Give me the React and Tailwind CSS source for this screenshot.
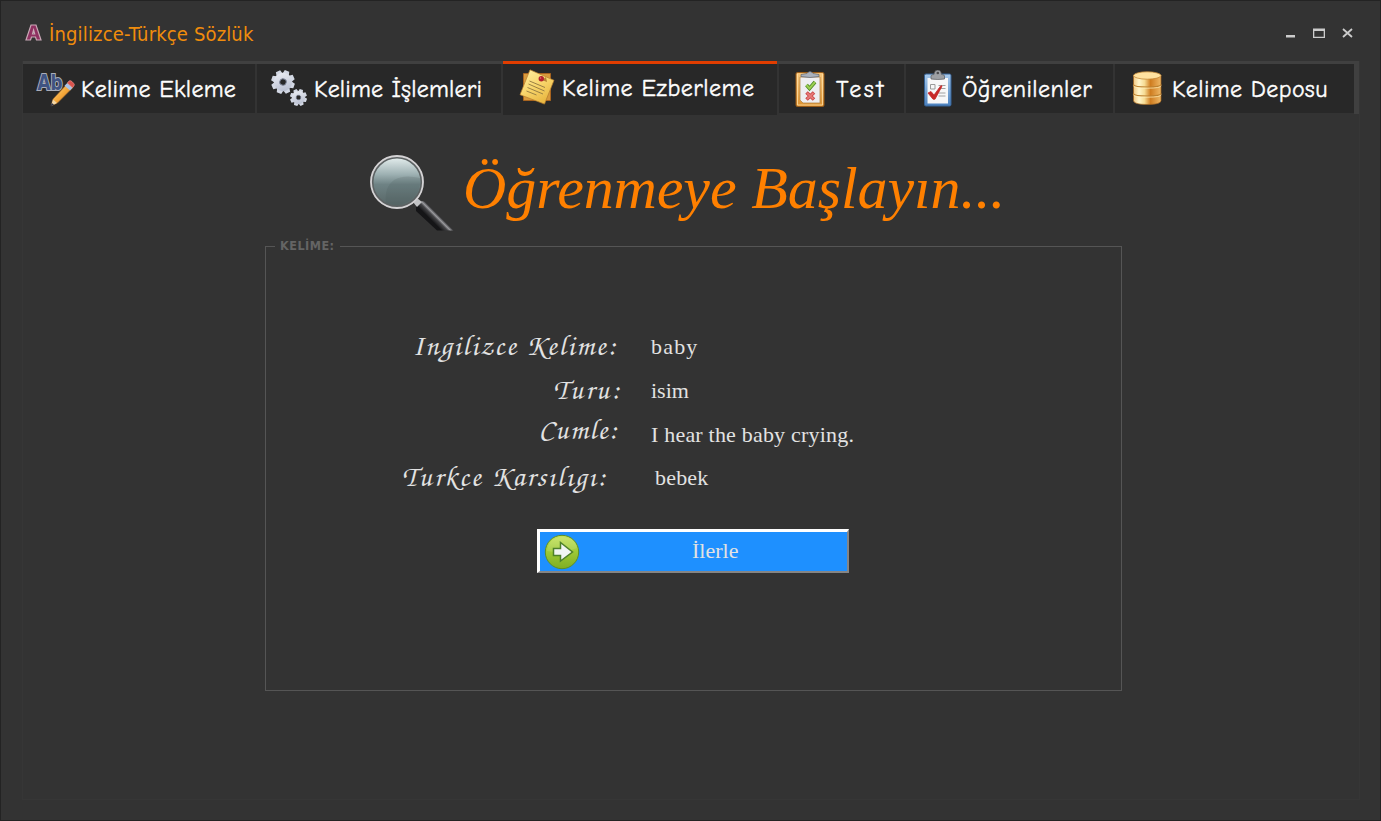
import React from "react";

function AbIcon() {
  return (
    <svg width="40" height="40" viewBox="0 0 40 40" className="shrink-0">
      <defs>
        <linearGradient id="pencil" x1="0" y1="0" x2="1" y2="1">
          <stop offset="0" stopColor="#ffe39a" />
          <stop offset="0.5" stopColor="#f5a83a" />
          <stop offset="1" stopColor="#b8641a" />
        </linearGradient>
      </defs>
      <text x="2.500" y="21" fontFamily="DejaVu Sans Condensed, DejaVu Sans" fontWeight="bold" fontSize="22" textLength="25" lengthAdjust="spacingAndGlyphs" fill="#3f5382" stroke="#a9adb9" strokeWidth="2.200" paintOrder="stroke">Ab</text>
      <path d="M33 14l5 4.500-15.500 15.500-6.500 3 2-7z" fill="url(#pencil)" stroke="#8a5a2a" strokeWidth="0.600" />
      <path d="M18 30.500l4 3.500-6 3z" fill="#f3d7a6" />
      <path d="M16.800 34l2.200 1.800-3.600 1.800z" fill="#27304a" />
      <path d="M29.500 16.800l2.800-2.800 5.200 4.700-2.500 2.700z" fill="#a9c3e6" />
      <path d="M32.300 14l1.700-2q1-1 3 .5l1.600 1.700q1.500 1.500.2 3l-1.300 1.500z" fill="#d9534e" stroke="#f4a8a0" strokeWidth="0.500" />
    </svg>
  );
}

function Gear({ cx, cy, r }) {
  const teeth = [0, 45, 90, 135, 180, 225, 270, 315];
  return (
    <g transform={`translate(${cx} ${cy}) rotate(20) scale(${r / 12})`}>
      {teeth.map((a) => (
        <path key={a} d="M-3.400 -8L-2.400 -12H2.400L3.400 -8z" transform={`rotate(${a})`} fill="#d3d8e4" />
      ))}
      <circle r="6.300" fill="none" stroke="url(#steel)" strokeWidth="6" />
      <circle r="3.300" fill="#282828" stroke="#8b93a7" strokeWidth="1" />
    </g>
  );
}

function GearsIcon() {
  return (
    <svg width="38" height="40" viewBox="0 0 38 40" className="shrink-0">
      <defs>
        <linearGradient id="steel" gradientUnits="userSpaceOnUse" x1="-8" y1="-12" x2="8" y2="12">
          <stop offset="0" stopColor="#f3f5fa" />
          <stop offset="1" stopColor="#aeb5c9" />
        </linearGradient>
      </defs>
      <Gear cx={12} cy={13} r={11.800} />
      <Gear cx={27.500} cy={28.500} r={8.500} />
    </svg>
  );
}

function NoteIcon() {
  return (
    <svg width="36" height="38" viewBox="0 0 36 38" className="shrink-0">
      <defs>
        <linearGradient id="note" x1="0" y1="0" x2="0.600" y2="1">
          <stop offset="0" stopColor="#fff0a8" />
          <stop offset="0.550" stopColor="#f8d66c" />
          <stop offset="1" stopColor="#e9b742" />
        </linearGradient>
      </defs>
      <path d="M4.500 4.500h27v27h-27z" fill="#d89a3c" stroke="#a8641f" strokeWidth="1" />
      <path d="M11 0.800l24 10.500-9.500 23.800L1 25.700z" fill="url(#note)" stroke="#b57b2c" strokeWidth="0.700" />
      <path d="M10.500 12l15.500 6.500M9.500 15l16 7M8.500 18.500l15.500 6.500M7.500 22l10 4" stroke="#9a8144" strokeWidth="1" />
      <path d="M23 11l5 2-1-5z" fill="#b68132" />
      <circle cx="22.300" cy="9.800" r="2.700" fill="#b3202e" />
      <circle cx="21.500" cy="9" r="0.800" fill="#e8707a" />
    </svg>
  );
}

function TestIcon() {
  return (
    <svg width="30" height="38" viewBox="0 0 30 38" className="shrink-0">
      <defs>
        <linearGradient id="board" x1="0" y1="0" x2="0" y2="1">
          <stop offset="0" stopColor="#f6c67c" />
          <stop offset="1" stopColor="#dc912f" />
        </linearGradient>
      </defs>
      <rect x="1" y="2.500" width="28" height="34" rx="1.500" fill="url(#board)" stroke="#9b5c19" />
      <path d="M2.500 4v31h25v-31" fill="none" stroke="#ffe1a8" strokeWidth="0.800" />
      <path d="M5 7h20v26h-17l-3-3z" fill="#eeeef1" stroke="#b48649" strokeWidth="0.800" />
      <path d="M6 6.500V4.500q3-.5 6-1Q15 -.5 18 3.500q3 .5 6 1V6.500q-9 2-18 0z" fill="#aab1bd" stroke="#5d6470" strokeWidth="0.700" />
      <path d="M11.500 15l3 3.500 5.500-6.500" fill="none" stroke="#4b8625" strokeWidth="3.600" />
      <path d="M11.500 15l3 3.500 5.500-6.500" fill="none" stroke="#9bcf50" strokeWidth="2" />
      <path d="M11.500 22.500l7.500 7M19 22.500l-7.500 7" stroke="#c94444" strokeWidth="3.600" />
      <path d="M12 23l6.500 6M18.500 23l-6.500 6" stroke="#e77a78" strokeWidth="1.800" />
    </svg>
  );
}

function LearnedIcon() {
  return (
    <svg width="30" height="38" viewBox="0 0 30 38" className="shrink-0">
      <defs>
        <linearGradient id="bluebd" x1="0" y1="0" x2="0" y2="1">
          <stop offset="0" stopColor="#a9cbed" />
          <stop offset="1" stopColor="#4a80bd" />
        </linearGradient>
      </defs>
      <rect x="2.500" y="4" width="26.500" height="32" rx="1.500" fill="url(#bluebd)" stroke="#376396" />
      <path d="M5.500 8h20.500v25.500h-20.500z" fill="#f7f7f8" />
      <path d="M9 9V6q0-1.500 3-1.500l.5-2q.5-2.500 3.300-2.500T19 2.500l.5 2q3 0 3 1.500v3q-6.500 1-13.500 0z" fill="#9da0a4" stroke="#5b5d60" strokeWidth="0.700" />
      <circle cx="15.800" cy="3" r="1.300" fill="#4b4b4d" />
      <path d="M8.500 14.500h4.500v4.500h-4.500z" fill="none" stroke="#9a9a9a" />
      <path d="M16.500 15.500h7M16.500 18.500h7M16.500 23h7M16.500 26h7" stroke="#a0a0a0" />
      <path d="M6 23l3-1.500 3 3.500 7-9.500 1 .7-7 13h-2z" fill="#c72828" stroke="#c72828" strokeWidth="0.800" />
    </svg>
  );
}

function DatabaseIcon() {
  return (
    <svg width="30" height="36" viewBox="0 0 30 36" className="shrink-0">
      <defs>
        <linearGradient id="gold">
          <stop offset="0" stopColor="#f3c983" />
          <stop offset="0.200" stopColor="#fff6cb" />
          <stop offset="0.400" stopColor="#f6dc94" />
          <stop offset="0.620" stopColor="#cf7d20" />
          <stop offset="1" stopColor="#eeb867" />
        </linearGradient>
      </defs>
      <path d="M1.500 4.500v25q0 4 13.750 4t13.750-4V4.500z" fill="url(#gold)" stroke="#a46520" strokeWidth="0.700" />
      <path d="M1.500 13.500q0 2.500 13.750 2.500t13.750-2.500M1.500 22.500q0 2.500 13.750 2.500t13.750-2.500" fill="none" stroke="#bd812f" strokeWidth="1.200" />
      <path d="M1.500 14.700q0 2.500 13.750 2.500t13.750-2.500M1.500 23.700q0 2.500 13.750 2.500t13.750-2.500" fill="none" stroke="#fff0bb" strokeWidth="0.700" />
      <ellipse cx="15.250" cy="4.500" rx="13.750" ry="3.700" fill="#ffe2a0" stroke="#c58a3a" strokeWidth="0.800" />
    </svg>
  );
}

function MagnifierIcon() {
  return (
    <svg width="86" height="78" viewBox="0 0 86 78" className="shrink-0">
      <defs>
        <linearGradient id="lens" x1="0" y1="0" x2="0" y2="1">
          <stop offset="0" stopColor="#e6efef" />
          <stop offset="0.350" stopColor="#9db0b2" />
          <stop offset="0.550" stopColor="#6e8284" />
          <stop offset="1" stopColor="#566464" />
        </linearGradient>
        <linearGradient id="handle" gradientUnits="userSpaceOnUse" x1="70" y1="54" x2="60" y2="64">
          <stop offset="0" stopColor="#151517" />
          <stop offset="0.350" stopColor="#2a2a2c" />
          <stop offset="0.550" stopColor="#98989c" />
          <stop offset="0.700" stopColor="#444447" />
          <stop offset="1" stopColor="#151517" />
        </linearGradient>
      </defs>
      <path d="M47 52l6-5q2 0 3 1l28.500 28.500H68L47 57z" fill="url(#handle)" />
      <path d="M44 48l4-4 5 4-5 5z" fill="#c2c3c5" />
      <circle cx="28" cy="28" r="25" fill="url(#lens)" stroke="#5d6263" strokeWidth="3" />
      <circle cx="28" cy="28" r="26" fill="none" stroke="#d5d3d5" strokeWidth="1.800" />
      <path d="M17 49q-2-16 8-23 10-6 26-2 1 15-8 21-12 9-26 4z" fill="#485657" opacity="0.180" />
    </svg>
  );
}

function NextIcon() {
  return (
    <svg width="36" height="36" viewBox="0 0 36 36" className="shrink-0">
      <defs>
        <linearGradient id="green" x1="0" y1="0" x2="0" y2="1">
          <stop offset="0" stopColor="#c5e35b" />
          <stop offset="0.500" stopColor="#9cc836" />
          <stop offset="1" stopColor="#7fae22" />
        </linearGradient>
      </defs>
      <circle cx="18" cy="18" r="16.700" fill="url(#green)" stroke="#5c8f27" />
      <path d="M3 17Q5 3 18 3t15 11Q18 20 3 17z" fill="#fff" opacity="0.120" />
      <path d="M9.500 14.500h7V8.500L28.500 18 16.500 27v-5.500h-7z" fill="#f1f5f3" stroke="#4e812a" strokeWidth="1.500" />
    </svg>
  );
}

const tabs = [
  { label: "Kelime Ekleme", icon: <AbIcon />, box: "w-[232px] pl-[12px] gap-[6px]", text: "tracking-[0.3px]" },
  { label: "Kelime İşlemleri", icon: <GearsIcon />, box: "w-[244px] pl-[14px] gap-[5px]", text: "tracking-[0.2px]" },
  { label: "Kelime Ezberleme", icon: <NoteIcon />, box: "w-[274px] pl-[16px] gap-[7px]", text: "tracking-[0.5px]", active: true },
  { label: "Test", icon: <TestIcon />, box: "w-[125px] pl-[16px] gap-[11px]", text: "tracking-[2.6px]" },
  { label: "Öğrenilenler", icon: <LearnedIcon />, box: "w-[207px] pl-[16px] gap-[10px]", text: "tracking-[0.4px]" },
  { label: "Kelime Deposu", icon: <DatabaseIcon />, box: "w-[239px] pl-[17px] gap-[10px]", text: "tracking-[0.4px]" },
];

function Tab({ label, icon, box, text, active }) {
  return (
    <div className={`flex shrink-0 items-center bg-[#282828] ${box} ${active ? "-mt-[3px] h-[54px] border-t-[3px] border-[#e13d00] pb-[3px]" : "h-[49px]"}`}>
      {icon}
      <span className={`whitespace-nowrap font-['Comic_Sans_MS','Comic_Neue','Open_Sans',sans-serif] text-[24px] leading-[30px] text-white [-webkit-text-stroke:0.4px_white] ${text}`}>{label}</span>
    </div>
  );
}

const rows = [
  { label: "Ingilizce Kelime:", value: "baby", row: "h-[44px]", l: "w-[351px] tracking-[1.8px] -mt-[6px]", v: "ml-[34px] tracking-[1.2px]" },
  { label: "Turu:", value: "isim", row: "h-[44px]", l: "w-[355px] tracking-[2px] -mt-[6px]", v: "ml-[30px]" },
  { label: "Cumle:", value: "I hear the baby crying.", row: "h-[43px]", l: "w-[352px] tracking-[1.4px] -mt-[14px]", v: "ml-[33px] tracking-[0.2px]" },
  { label: "Turkce Karsılıgı:", value: "bebek", row: "h-[43px]", l: "w-[341px] tracking-[2px] -mt-[6px]", v: "ml-[48px] tracking-[0.2px]" },
];

export default function App() {
  return (
    <div className="flex h-[821px] w-[1381px] flex-col overflow-hidden border border-[#232323] bg-[#333333]">
      <header className="flex h-[60px] shrink-0 items-center justify-between pl-[24px] pr-[25px] pt-[5px]">
        <div className="flex items-center gap-[7px]">
          <svg width="17" height="17" viewBox="0 0 17 17" className="-mt-[2px]">
            <path fillRule="evenodd" d="M6 1h5l5 15h-4.500l-1-3h-4l-1 3H1zM7.500 10h2.200l-1.100-4z" fill="#8f3161" stroke="#c9a9b7" strokeWidth="1.200" />
          </svg>
          <h1 className="whitespace-nowrap font-['DejaVu_Sans_Condensed','DejaVu_Sans',sans-serif] text-[20px] leading-[24px] tracking-[0.15px] text-[#f08c0c]">İngilizce-Türkçe Sözlük</h1>
        </div>
        <svg width="70" height="14" viewBox="0 0 70 14" className="text-[#cccccc]">
          <path d="M1 8h9v2.500H1z" fill="currentColor" />
          <path fillRule="evenodd" d="M28 1.500h12v9.500H28zM29.300 4v5.700h9.400V4z" fill="currentColor" />
          <path d="M58 2l9 8M67 2l-9 8" stroke="currentColor" strokeWidth="1.800" />
        </svg>
      </header>
      <main className="mx-[21px] flex h-[739px] w-[1338px] shrink-0 flex-col border border-t-0 border-[#363636]">
        <nav className="flex h-[53px] shrink-0 gap-[2px] border-r-[5px] border-t-[3px] border-[#404040] bg-[#333333]">
          {tabs.map((t) => <Tab key={t.label} {...t} />)}
        </nav>
        <section className="flex flex-col">
          <div className="flex h-[124px] items-start pl-[346px] pt-[40px]">
            <MagnifierIcon />
            <h2 className="ml-[8px] whitespace-nowrap font-['Liberation_Serif',serif] text-[60px] italic leading-[68px] tracking-[-0.1px] text-[#ff8000]">Öğrenmeye Başlayın...</h2>
          </div>
          <fieldset className="ml-[242px] h-[453px] w-[857px] border border-[#555555] pt-[71px]">
            <legend className="ml-[9px] px-[5px] font-['DejaVu_Sans_Condensed','DejaVu_Sans',sans-serif] text-[12.5px] font-bold leading-[16px] tracking-[0.5px] text-[#646464]">KELİME:</legend>
            {rows.map((r) => (
              <div key={r.label} className={`flex items-center text-[#e2e2e2] ${r.row}`}>
                <span className={`whitespace-nowrap text-right font-['Lucida_Calligraphy','Lucida_Handwriting','Monotype_Corsiva','Z003','URW_Chancery_L','TeX_Gyre_Chorus','Apple_Chancery','Liberation_Serif',serif] text-[29px] leading-[30px] ${r.l}`}>{r.label}</span>
                <span className={`whitespace-nowrap font-['Liberation_Serif',serif] text-[22px] leading-[28px] ${r.v}`}>{r.value}</span>
              </div>
            ))}
            <button className="ml-[271px] mt-[30px] flex h-[44px] w-[312px] items-center border-b-2 border-l-[3px] border-r-2 border-t-[3px] border-b-[#858585] border-l-white border-r-[#858585] border-t-white bg-[#1e90ff] pl-[4px]">
              <NextIcon />
              <span className="-mt-[2px] ml-[112px] font-['Liberation_Serif',serif] text-[22px] leading-[28px] text-[#e2e2e2]">İlerle</span>
            </button>
          </fieldset>
        </section>
      </main>
    </div>
  );
}
